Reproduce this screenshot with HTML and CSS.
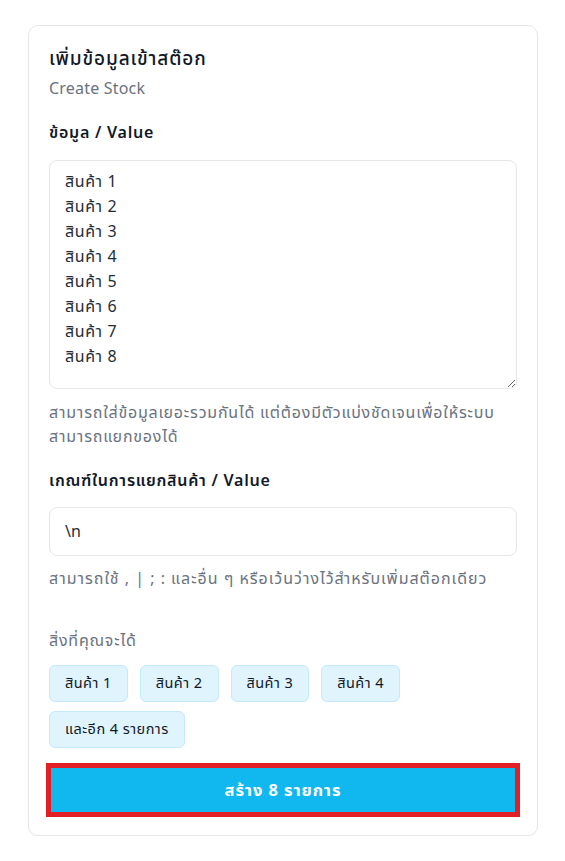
FILE: index.html
```html
<!DOCTYPE html>
<html lang="th">
<head>
<meta charset="utf-8">
<title>Create Stock</title>
<link rel="stylesheet" href="styles.css">
</head>
<body>
<div class="card">
  <div class="title">เพิ่มข้อมูลเข้าสต๊อก</div>
  <div class="subtitle">Create Stock</div>

  <div class="label first">ข้อมูล / Value</div>
  <textarea class="area">สินค้า 1
สินค้า 2
สินค้า 3
สินค้า 4
สินค้า 5
สินค้า 6
สินค้า 7
สินค้า 8</textarea>
  <div class="help">สามารถใส่ข้อมูลเยอะรวมกันได้ แต่ต้องมีตัวแบ่งชัดเจนเพื่อให้ระบบ สามารถแยกของได้</div>

  <div class="label">เกณฑ์ในการแยกสินค้า / Value</div>
  <input class="input" type="text" value="\n">
  <div class="help help2">สามารถใช้ , | ; : และอื่น ๆ หรือเว้นว่างไว้สำหรับเพิ่มสต๊อกเดียว</div>

  <div class="result-title">สิ่งที่คุณจะได้</div>
  <div class="chips">
    <span class="chip">สินค้า 1</span>
    <span class="chip">สินค้า 2</span>
    <span class="chip">สินค้า 3</span>
    <span class="chip">สินค้า 4</span>
    <span class="chip">และอีก 4 รายการ</span>
  </div>

  <button class="btn">สร้าง 8 รายการ</button>
</div>
</body>
</html>
```

FILE: styles.css
```css
* { box-sizing: border-box; }
html, body { margin: 0; background: #ffffff; }
body {
  padding: 25px 27px 0 28px;
  font-family: "Noto Sans Thai", "Noto Sans", sans-serif;
  color: #111827;
}
.card {
  border: 1px solid #e5e7eb;
  border-radius: 10px;
  padding: 20px 20px 21px;
  box-shadow: 0 1px 2px rgba(0,0,0,0.04);
  display: flex;
  flex-direction: column;
}
.title {
  font-size: 19px;
  line-height: 28px;
  font-weight: 500;
  letter-spacing: 0.9px;
  color: #111827;
}
.subtitle {
  margin-top: 3px;
  font-size: 16px;
  line-height: 24px;
  letter-spacing: 0.2px;
  color: #6b7280;
}
.label {
  margin-top: 20px;
  font-size: 16px;
  line-height: 24px;
  font-weight: 600;
  letter-spacing: 0.75px;
  color: #111827;
}
.area {
  margin-top: 15px;
  height: 229px;
  width: 100%;
  border: 1px solid #e5e7eb;
  border-radius: 8px;
  padding: 9px 15px;
  font: inherit;
  font-size: 16px;
  font-weight: 400;
  line-height: 25px;
  letter-spacing: 0.6px;
  color: #262c36;
  resize: vertical;
  outline: none;
}
.help {
  margin-top: 12px;
  font-size: 16px;
  line-height: 24px;
  letter-spacing: 0.8px;
  color: #6b7280;
}
.help2 { margin-top: 11px; letter-spacing: 1px; }
.input {
  margin-top: 14px;
  height: 49px;
  width: 100%;
  border: 1px solid #e5e7eb;
  border-radius: 8px;
  padding: 0 15px;
  font: inherit;
  font-size: 16px;
  color: #262c36;
  outline: none;
}
.result-title {
  margin-top: 38px;
  font-size: 16px;
  line-height: 24px;
  letter-spacing: 0.8px;
  color: #6b7280;
}
.chips {
  margin-top: 12px;
  display: flex;
  flex-wrap: wrap;
  gap: 9px 12px;
}
.chip {
  display: inline-flex;
  align-items: center;
  height: 37px;
  padding: 0 15px;
  background: #e0f4fe;
  border: 1px solid #c4e9fb;
  border-radius: 6px;
  font-size: 14.5px;
  letter-spacing: 0.45px;
  color: #111827;
}
.btn {
  margin-top: 18px;
  height: 48px;
  width: 100%;
  background: #10b8ef;
  border: 2px solid #e21f26;
  box-shadow: 0 0 0 3px #e21f26;
  border-radius: 0;
  color: #ffffff;
  font: inherit;
  font-size: 16.5px;
  font-weight: 700;
  letter-spacing: 0.9px;
  cursor: pointer;
}
```
